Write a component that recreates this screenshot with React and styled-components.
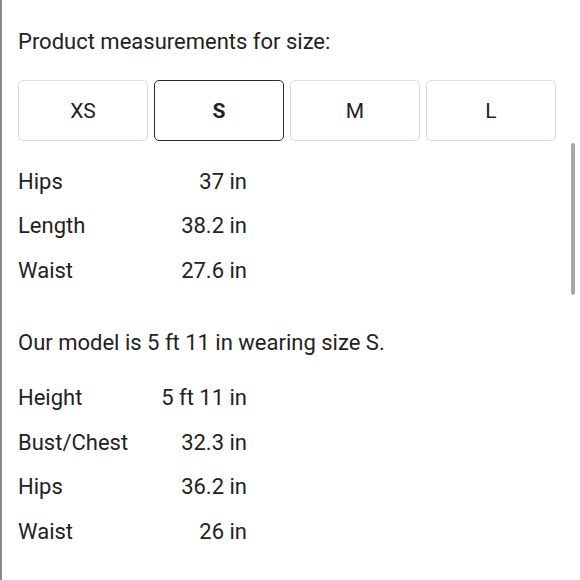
import React from "react";
import styled, { createGlobalStyle } from "styled-components";

const GlobalStyle = createGlobalStyle`
  html, body {
    margin: 0;
    padding: 0;
    background: #fff;
  }
  body {
    font-family: Roboto, "Noto Sans", Arial, sans-serif;
    color: #222;
  }
`;

const sizes = ["XS", "S", "M", "L"];

const product = [
  { label: "Hips", value: "37 in" },
  { label: "Length", value: "38.2 in" },
  { label: "Waist", value: "27.6 in" },
];

const model = [
  { label: "Height", value: "5 ft 11 in" },
  { label: "Bust/Chest", value: "32.3 in" },
  { label: "Hips", value: "36.2 in" },
  { label: "Waist", value: "26 in" },
];

const App = () => {
  return (
    <>
      <GlobalStyle />
      <StPage>
        <StTitle>Product measurements for size:</StTitle>
        <StSizeRow>
          {sizes.map((s) => (
            <StSizeButton key={s} $active={s === "S"}>
              {s}
            </StSizeButton>
          ))}
        </StSizeRow>

        <StTable $top={18}>
          {product.map((r) => (
            <StRow key={r.label}>
              <span>{r.label}</span>
              <span>{r.value}</span>
            </StRow>
          ))}
        </StTable>

        <StNote>Our model is 5 ft 11 in wearing size S.</StNote>

        <StTable $top={11}>
          {model.map((r) => (
            <StRow key={r.label}>
              <span>{r.label}</span>
              <span>{r.value}</span>
            </StRow>
          ))}
        </StTable>

        <StScrollbar />
      </StPage>
    </>
  );
};

export default App;

const StPage = styled.div`
  position: relative;
  box-sizing: border-box;
  height: 580px;
  overflow: hidden;
  border-left: 2px solid #8a8a8a;
  padding: 30px 0 0 16px;
`;

const StTitle = styled.h3`
  margin: 0;
  font-size: 22px;
  line-height: 24px;
  font-weight: 400;
  color: #222;
`;

const StSizeRow = styled.div`
  display: grid;
  grid-template-columns: repeat(4, 130px);
  gap: 6px;
  margin-top: 26px;
`;

const StSizeButton = styled.button`
  height: 61px;
  box-sizing: border-box;
  background: #fff;
  border: ${(p) => (p.$active ? "1.5px solid #2a2a2a" : "1px solid #dcdcdc")};
  border-radius: 5px;
  font-family: inherit;
  font-size: 21px;
  font-weight: ${(p) => (p.$active ? 700 : 400)};
  color: #222;
  cursor: pointer;
`;

const StTable = styled.div`
  display: flex;
  flex-direction: column;
  width: 229px;
  margin-top: ${(p) => p.$top}px;
`;

const StRow = styled.div`
  display: flex;
  justify-content: space-between;
  align-items: center;
  height: 44.5px;
  font-size: 22px;
  color: #222;
`;

const StNote = styled.p`
  margin: 28px 0 0;
  height: 44px;
  display: flex;
  align-items: center;
  font-size: 22px;
  color: #222;
`;

const StScrollbar = styled.div`
  position: absolute;
  top: 143px;
  right: 5px;
  width: 4px;
  height: 152px;
  border-radius: 2px;
  background: #a9a9a9;
`;
